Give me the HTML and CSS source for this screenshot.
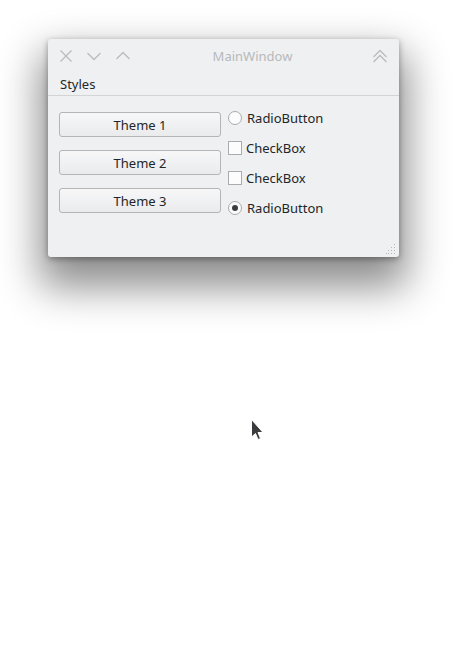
FILE: index.html
```html
<!DOCTYPE html>
<html>
<head>
<meta charset="utf-8">
<link rel="stylesheet" href="styles.css">
</head>
<body>
<div class="desktop">
  <div class="window">
    <div class="titlebar">
      <div class="tb-left">
        <svg class="tb-icon" width="14" height="14" viewBox="0 0 14 14"><path d="M1.5 1.5 L12.5 12.5 M12.5 1.5 L1.5 12.5" stroke="#b9bcbf" stroke-width="1.3" fill="none"/></svg>
        <svg class="tb-icon" width="16" height="14" viewBox="0 0 16 14"><path d="M1.5 4 L8 10.5 L14.5 4" stroke="#b9bcbf" stroke-width="1.3" fill="none"/></svg>
        <svg class="tb-icon" width="16" height="14" viewBox="0 0 16 14"><path d="M1.5 10 L8 3.5 L14.5 10" stroke="#b9bcbf" stroke-width="1.3" fill="none"/></svg>
      </div>
      <div class="title">MainWindow</div>
      <div class="tb-right">
        <svg class="tb-icon" width="16" height="14" viewBox="0 0 16 14"><path d="M1.5 8 L8 1.5 L14.5 8 M1.5 13 L8 6.5 L14.5 13" stroke="#b9bcbf" stroke-width="1.3" fill="none"/></svg>
      </div>
    </div>
    <div class="menubar"><span class="menu-item">Styles</span></div>
    <div class="content">
      <div class="buttons">
        <button class="btn">Theme 1</button>
        <button class="btn">Theme 2</button>
        <button class="btn">Theme 3</button>
      </div>
      <div class="options">
        <div class="opt"><span class="radio"></span><span class="label">RadioButton</span></div>
        <div class="opt"><span class="check"></span><span class="label">CheckBox</span></div>
        <div class="opt"><span class="check"></span><span class="label">CheckBox</span></div>
        <div class="opt"><span class="radio on"></span><span class="label">RadioButton</span></div>
      </div>
    </div>
    <svg class="grip" width="10" height="10" viewBox="0 0 10 10">
      <g fill="#b4b6b8">
        <rect x="8" y="0" width="1" height="1"/>
        <rect x="5" y="3" width="1" height="1"/><rect x="8" y="3" width="1" height="1"/>
        <rect x="2" y="6" width="1" height="1"/><rect x="5" y="6" width="1" height="1"/><rect x="8" y="6" width="1" height="1"/>
        <rect x="0" y="9" width="1" height="1"/><rect x="2" y="9" width="1" height="1"/><rect x="5" y="9" width="1" height="1"/><rect x="8" y="9" width="1" height="1"/>
      </g>
    </svg>
  </div>
  <svg class="cursor" width="16" height="24" viewBox="0 0 16 24">
    <path d="M1.5 1.5 L1.5 19 L5.5 15.5 L8 21.5 L10.5 20.5 L8 14.5 L13 14.5 Z" fill="#3a3c3e" stroke="#ffffff" stroke-width="1"/>
  </svg>
</div>
</body>
</html>
```
FILE: styles.css
```css
html, body {
  margin: 0;
  padding: 0;
  background: #ffffff;
}
body {
  font-family: "Noto Sans", "Open Sans", sans-serif;
  font-size: 13px;
  color: #232629;
}
.desktop {
  position: relative;
  width: 476px;
  height: 663px;
  padding: 39px 0 0 48px;
  box-sizing: border-box;
}
.window {
  position: relative;
  width: 351px;
  height: 218px;
  background: #eff0f1;
  border-radius: 3px;
  box-shadow: 0 22px 40px 8px rgba(0,0,0,0.45), 0 2px 6px rgba(0,0,0,0.35);
  display: flex;
  flex-direction: column;
}
.titlebar {
  height: 34px;
  display: flex;
  align-items: center;
  padding: 0 11px 0 11px;
  position: relative;
}
.tb-left {
  display: flex;
  align-items: center;
  gap: 13px;
}
.tb-icon { display: block; }
.title {
  flex: 1;
  text-align: center;
  color: #b6b9bc;
  font-size: 13px;
  padding-left: 2px;
}
.tb-right { display: flex; align-items: center; }
.menubar {
  height: 22px;
  border-bottom: 1px solid #d3d4d5;
  display: flex;
  align-items: center;
  padding-left: 12px;
}
.menu-item { font-size: 13px; }
.content {
  display: flex;
  padding-left: 11px;
}
.buttons {
  display: flex;
  flex-direction: column;
  gap: 13px;
  padding-top: 16px;
  width: 162px;
}
.btn {
  box-sizing: border-box;
  height: 25px;
  width: 162px;
  border: 1px solid #b3b5b7;
  border-radius: 3px;
  background: linear-gradient(#f7f7f8, #eaebec);
  font-family: "Noto Sans", "Open Sans", sans-serif;
  font-size: 13px;
  color: #232629;
  padding: 0;
  margin: 0;
}
.options {
  display: flex;
  flex-direction: column;
  padding-top: 7px;
  padding-left: 7px;
}
.opt {
  height: 30px;
  display: flex;
  align-items: center;
}
.radio {
  width: 12px;
  height: 12px;
  border: 1px solid #a9abad;
  border-radius: 50%;
  background: #fcfcfc;
  display: flex;
  align-items: center;
  justify-content: center;
  margin-right: 5px;
}
.radio.on::after {
  content: "";
  width: 6px;
  height: 6px;
  border-radius: 50%;
  background: #3b3e40;
}
.check {
  width: 12px;
  height: 12px;
  border: 1px solid #a9abad;
  background: #fcfcfc;
  margin-right: 4px;
}
.label { font-size: 13px; }
.grip {
  position: absolute;
  right: 3px;
  bottom: 3px;
}
.cursor {
  position: absolute;
  left: 250px;
  top: 418px;
}
```
